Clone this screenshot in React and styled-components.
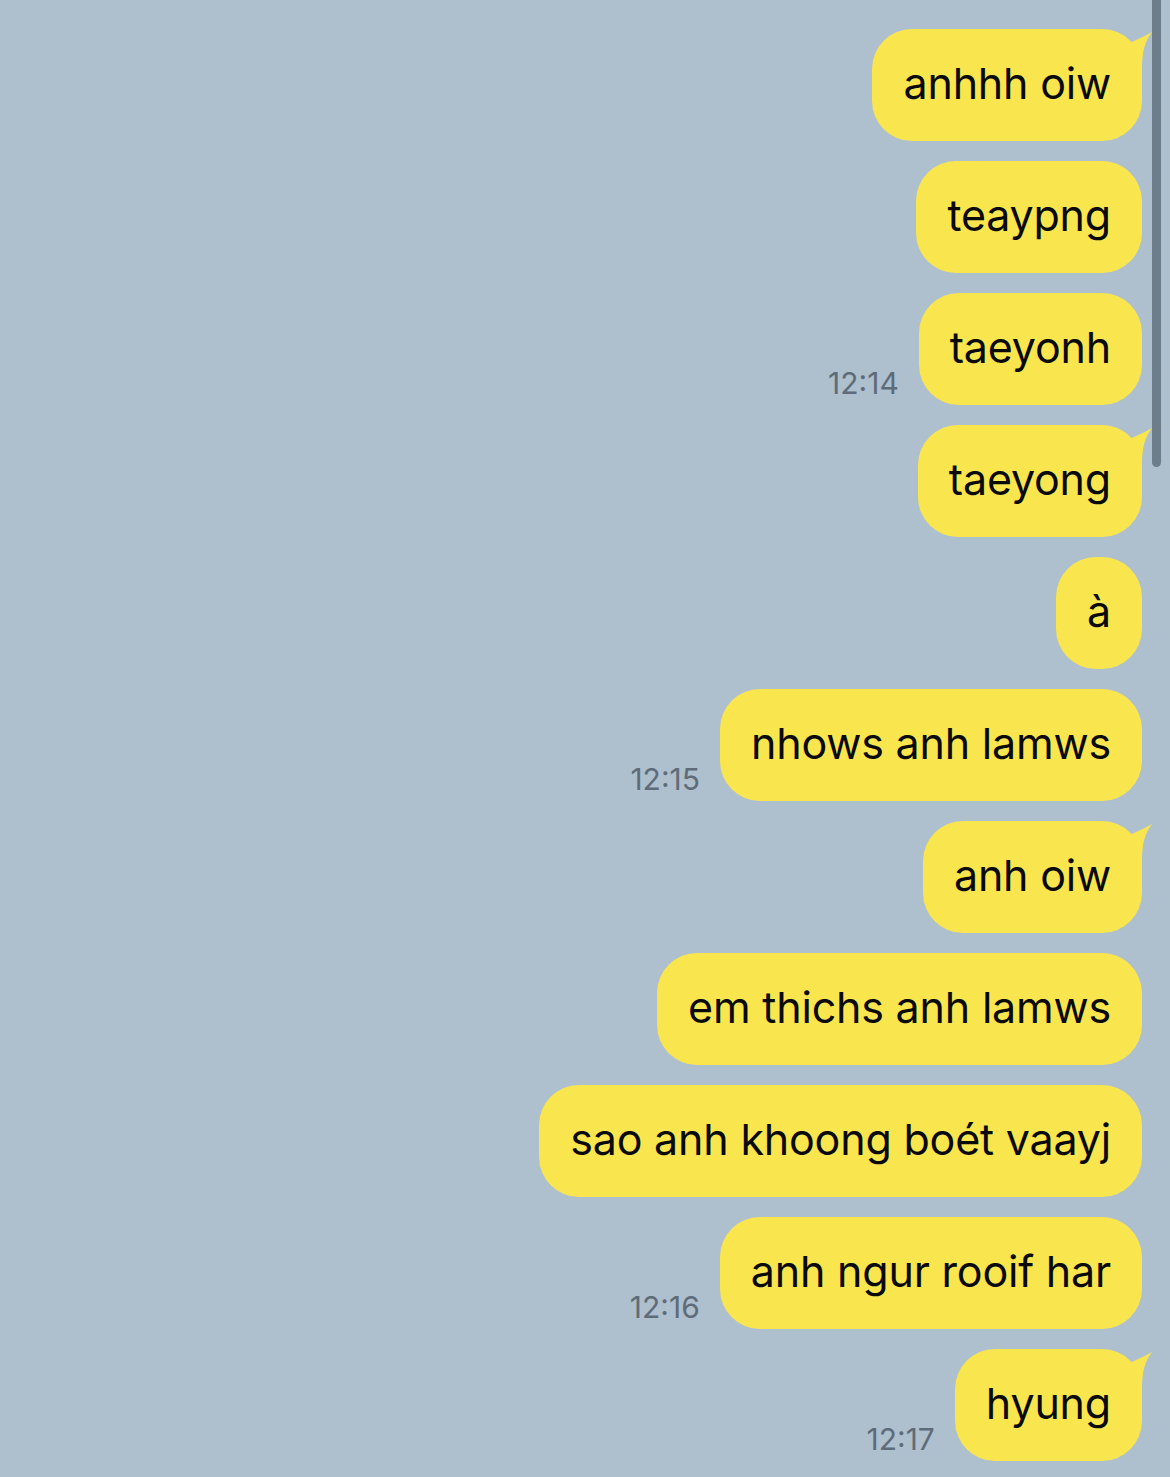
import React from "react";
import styled, { createGlobalStyle } from "styled-components";

const Global = createGlobalStyle`
  html, body { margin: 0; padding: 0; background: #AEBFCE; }
  body { width: 1170px; height: 1477px; overflow: hidden; }
`;

const Screen = styled.div`
  position: relative;
  width: 1170px;
  height: 1477px;
  background: #AEBFCE;
  font-family: Inter, "Noto Sans", sans-serif;
  box-sizing: border-box;
  padding: 29px 28px 0 0;
  display: flex;
  flex-direction: column;
  align-items: flex-end;
  gap: 20px;
`;

const Row = styled.div`
  display: flex;
  align-items: flex-end;
  gap: 20px;
`;

const Time = styled.span`
  font-size: 30px;
  line-height: 1;
  color: #5E6C79;
  margin-bottom: 7px;
`;

const Bubble = styled.div`
  position: relative;
  height: 112px;
  box-sizing: border-box;
  padding: 0 31px 4px;
  display: flex;
  align-items: center;
  background: #F9E64F;
  border-radius: 40px;
  font-size: 43px;
  color: #0A0A0A;
  white-space: nowrap;
  letter-spacing: -0.2px;
`;

const Tail = styled.svg`
  position: absolute;
  top: 0;
  right: -10px;
  width: 34px;
  height: 40px;
`;

const ScrollThumb = styled.div`
  position: absolute;
  top: 0;
  right: 9px;
  width: 9px;
  height: 467px;
  background: #6E7D8A;
  border-radius: 0 0 5px 5px;
`;

const messages = [
  { text: "anhhh oiw", tail: true },
  { text: "teaypng" },
  { text: "taeyonh", time: "12:14" },
  { text: "taeyong", tail: true },
  { text: "à" },
  { text: "nhows anh lamws", time: "12:15" },
  { text: "anh oiw", tail: true },
  { text: "em thichs anh lamws" },
  { text: "sao anh khoong boét vaayj" },
  { text: "anh ngur rooif har", time: "12:16" },
  { text: "hyung", tail: true, time: "12:17" },
];

function TailShape() {
  return (
    <Tail viewBox="0 0 34 40">
      <path d="M0,20 C14,12 26,8 34,3 C27,12 24,22 24,40 L0,40 Z" fill="#F9E64F" />
    </Tail>
  );
}

export default function App() {
  return (
    <>
      <Global />
      <Screen>
        {messages.map((m, i) => (
          <Row key={i}>
            {m.time && <Time>{m.time}</Time>}
            <Bubble>
              {m.tail && <TailShape />}
              {m.text}
            </Bubble>
          </Row>
        ))}
        <ScrollThumb />
      </Screen>
    </>
  );
}
